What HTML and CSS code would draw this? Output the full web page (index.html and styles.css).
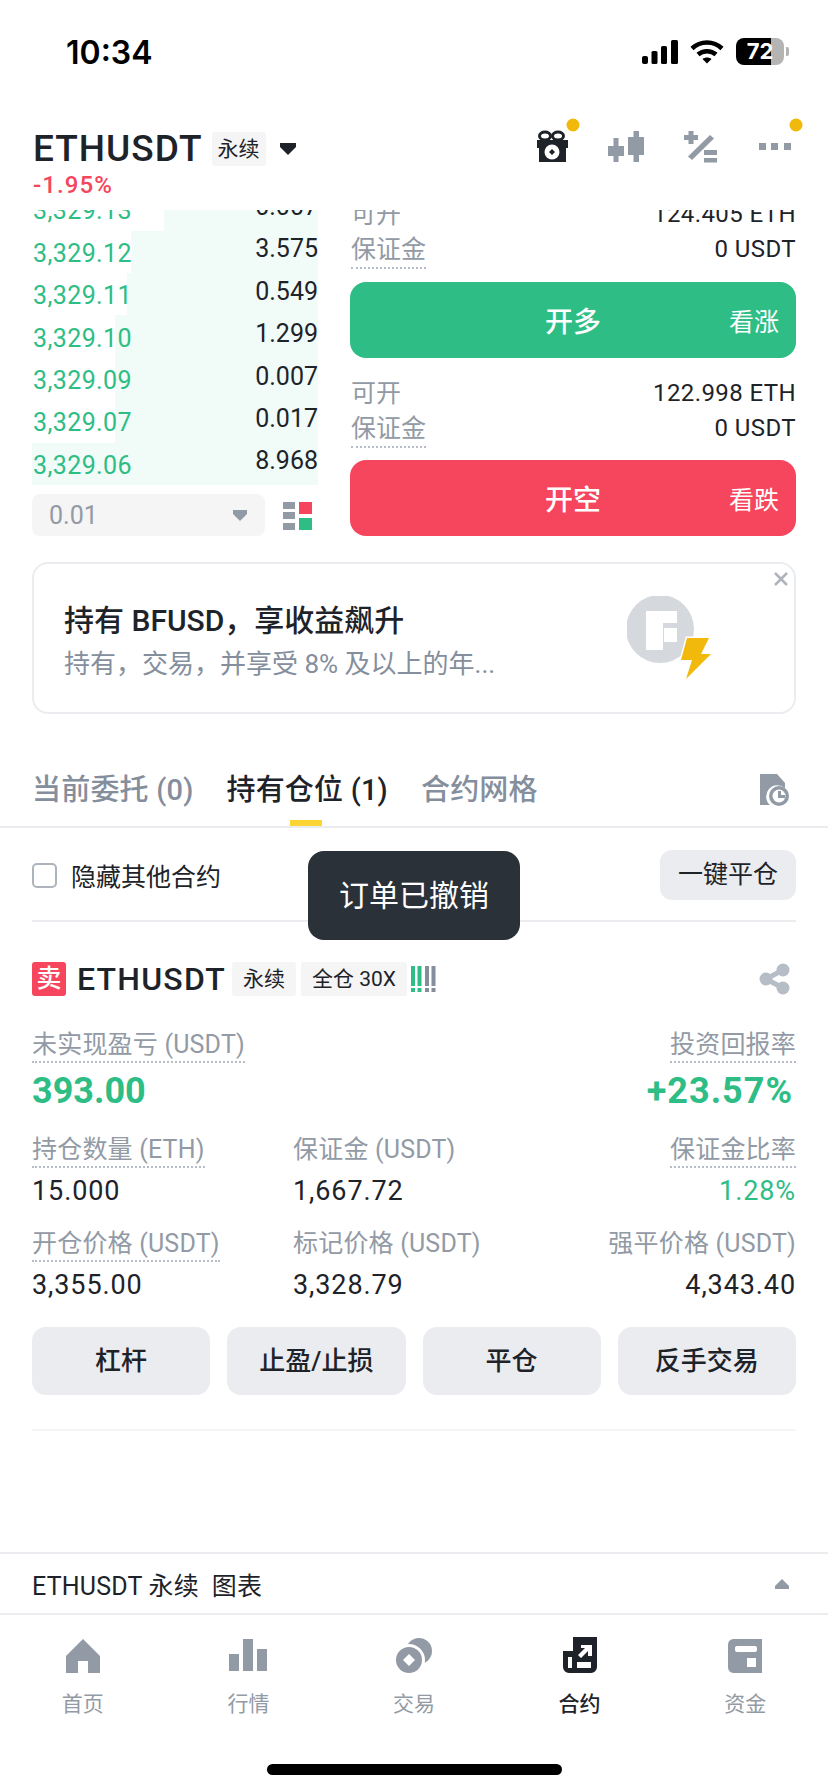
FILE: index.html

```html
<!DOCTYPE html>
<html lang="zh-CN">
<head>
  <meta charset="UTF-8" />
  <meta name="viewport" content="width=device-width, initial-scale=1.0" />
  <title>ETHUSDT 永续</title>
  <link rel="stylesheet" href="styles.css">
</head>
<body>
  <div class="status-bar">
    <span class="clock">10:34</span>
    <div class="status-icons">
      <svg width="36" height="24" viewBox="0 0 36 24" fill="#000">
        <rect x="0" y="16" width="6" height="8" rx="2"/>
        <rect x="9.500" y="11" width="6" height="13" rx="1.500"/>
        <rect x="19" y="6" width="6" height="18" rx="1.500"/>
        <rect x="29" y="0" width="7" height="24" rx="1.500"/>
      </svg>
      <svg class="wifi" width="34" height="24" viewBox="0 0 34 24" fill="none" stroke="#000" stroke-width="4.500">
        <path d="M2 8.500C10.500 0.500 23.500 0.500 32 8.500"/>
        <path d="M8 14.500C13 10 21 10 26 14.500"/>
        <path d="M12.500 19L17 23.500L21.500 19C19 17 15 17 12.500 19Z" fill="#000" stroke="none"/>
      </svg>
      <div class="battery"><span>72</span></div>
      <i class="battery-nub"></i>
    </div>
  </div>

  <header class="top-bar">
    <div class="symbol">
      <div class="symbol-line">
        <span class="symbol-name">ETHUSDT</span>
        <span class="tag tag-top">永续</span>
        <svg class="symbol-caret" width="18" height="14" viewBox="0 0 18 14"><path d="M1 1H17V5L9 13L1 5Z" fill="#1e2329"/></svg>
      </div>
      <div class="symbol-change">-1.95%</div>
    </div>
    <div class="top-icons">
      <svg width="74" height="48" viewBox="0 0 74 48">
        <g fill="none" stroke="#1e2329" stroke-width="3"><ellipse cx="30" cy="18" rx="5.500" ry="4"/><ellipse cx="43" cy="18" rx="5.500" ry="4"/></g>
        <rect x="22" y="22" width="31" height="8" fill="#1e2329"/>
        <rect x="24" y="29" width="27" height="15" fill="#1e2329"/>
        <circle cx="37" cy="34" r="7.500" fill="#fff"/>
        <path d="M37 31L40 34L37 37L34 34Z" fill="#1e2329"/>
        <circle cx="58" cy="7" r="6.500" fill="#f0b90b"/>
      </svg>
      <svg width="74" height="48" viewBox="0 0 74 48" fill="#929aa5">
        <rect x="19" y="28" width="16" height="10"/><rect x="24.500" y="20" width="5" height="24"/>
        <rect x="39" y="19" width="16" height="18"/><rect x="44.500" y="13" width="5.500" height="31"/>
      </svg>
      <svg width="74" height="48" viewBox="0 0 74 48" fill="#929aa5">
        <rect x="21" y="17" width="14" height="5"/><rect x="25.500" y="13" width="5" height="13"/>
        <path d="M47 17L51 20.500L29 42L25 38.500Z"/>
        <rect x="41" y="32" width="13" height="5"/><rect x="41" y="40" width="13" height="4.500"/>
      </svg>
      <svg width="74" height="48" viewBox="0 0 74 48" fill="#929aa5">
        <rect x="22" y="25" width="7" height="7"/><rect x="34" y="25" width="7" height="7"/><rect x="47" y="25" width="7" height="7"/>
        <circle cx="59" cy="7" r="6.500" fill="#f0b90b"/>
      </svg>
    </div>
  </header>

  <section class="trade">
    <div class="book-col">
      <div class="book">
        <div class="book-row" style="background-size:154px 100%"><span class="price">3,329.13</span><span class="qty">0.007</span></div>
        <div class="book-row" style="background-size:187px 100%"><span class="price">3,329.12</span><span class="qty">3.575</span></div>
        <div class="book-row" style="background-size:191px 100%"><span class="price">3,329.11</span><span class="qty">0.549</span></div>
        <div class="book-row" style="background-size:203px 100%"><span class="price">3,329.10</span><span class="qty">1.299</span></div>
        <div class="book-row" style="background-size:203px 100%"><span class="price">3,329.09</span><span class="qty">0.007</span></div>
        <div class="book-row" style="background-size:203px 100%"><span class="price">3,329.07</span><span class="qty">0.017</span></div>
        <div class="book-row" style="background-size:286px 100%"><span class="price">3,329.06</span><span class="qty">8.968</span></div>
      </div>
      <div class="book-foot">
        <div class="tick-select">
          <span>0.01</span>
          <svg width="14" height="11" viewBox="0 0 14 11"><path d="M0 0H14V4L7 11L0 4Z" fill="#929aa5"/></svg>
        </div>
        <svg width="29" height="29" viewBox="0 0 29 29">
          <rect x="0" y="1" width="12" height="7" fill="#929aa5"/>
          <rect x="0" y="11" width="12" height="7" fill="#929aa5"/>
          <rect x="0" y="22" width="12" height="7" fill="#929aa5"/>
          <rect x="16" y="1" width="13" height="12" fill="#f6465d"/>
          <rect x="16" y="17" width="13" height="12" fill="#2ebd85"/>
        </svg>
      </div>
    </div>

    <div class="order-col">
      <div class="order-clip">
        <div class="order-line"><span class="order-label">可开</span><span>124.405 ETH</span></div>
        <div class="order-line"><span class="order-label dotted">保证金</span><span>0 USDT</span></div>
      </div>
      <div class="order-btn long"><b>开多</b><span>看涨</span></div>
      <div class="order-block">
        <div class="order-line"><span class="order-label">可开</span><span>122.998 ETH</span></div>
        <div class="order-line"><span class="order-label dotted">保证金</span><span>0 USDT</span></div>
      </div>
      <div class="order-btn short"><b>开空</b><span>看跌</span></div>
    </div>
  </section>

  <section class="banner">
    <div class="banner-text">
      <div class="banner-title">持有 BFUSD，享收益飙升</div>
      <div class="banner-sub">持有，交易，并享受 8% 及以上的年...</div>
    </div>
    <svg class="banner-logo" width="86" height="86" viewBox="0 0 86 86">
      <circle cx="33" cy="33" r="34" fill="#d5d8dd"/>
      <path d="M19 15H50V27H36V54H19Z" fill="#fff"/>
      <rect x="37" y="32" width="13" height="14" fill="#fff"/>
      <path d="M60 42H82L74 58H84L59 83L65 64H54Z" fill="#f0b90b" stroke="#fff" stroke-width="3" paint-order="stroke"/>
    </svg>
    <svg class="banner-close" width="14" height="14" viewBox="0 0 14 14" fill="none" stroke="#aeb4bc" stroke-width="2.500"><path d="M1 1L13 13M13 1L1 13"/></svg>
  </section>

  <nav class="tabs">
    <span class="tab">当前委托 (0)</span>
    <span class="tab active">持有仓位 (1)</span>
    <span class="tab">合约网格</span>
    <svg class="tab-history" width="30" height="34" viewBox="0 0 30 34">
      <path d="M0 1H17L25 10V15A11 11 0 0 0 10 32H0Z" fill="#929aa5"/>
      <circle cx="19" cy="23" r="10" fill="#929aa5"/>
      <circle cx="19" cy="23" r="6.500" fill="#fff"/>
      <path d="M18 18H21V22H25V25H18Z" fill="#929aa5"/>
    </svg>
  </nav>

  <section class="positions">
    <div class="filter-row">
      <label class="hide-other"><i class="checkbox"></i>隐藏其他合约</label>
      <span class="close-all">一键平仓</span>
    </div>

    <div class="toast">订单已撤销</div>

    <div class="pos-head">
      <span class="side-badge">卖</span>
      <span class="pos-name">ETHUSDT</span>
      <span class="tag">永续</span>
      <span class="tag">全仓 30X</span>
      <svg class="risk" width="25" height="26" viewBox="0 0 25 26">
        <g fill="#2ebd85"><rect x="0" y="0" width="4" height="20"/><rect x="0" y="22" width="4" height="4"/></g>
        <g fill="#2ebd85"><rect x="6.500" y="0" width="4" height="20"/><rect x="6.500" y="22" width="4" height="4"/></g>
        <g fill="#848e9c"><rect x="14" y="0" width="4" height="20"/><rect x="14" y="22" width="4" height="4"/></g>
        <g fill="#848e9c"><rect x="20.500" y="0" width="4" height="20"/><rect x="20.500" y="22" width="4" height="4"/></g>
      </svg>
      <svg class="share" width="31" height="32" viewBox="0 0 31 32">
        <path d="M24 7L7 16L24 25" fill="none" stroke="#b7bdc6" stroke-width="5"/>
        <circle cx="24" cy="7" r="6.500" fill="#b7bdc6"/><circle cx="7" cy="16" r="6.500" fill="#b7bdc6"/><circle cx="24" cy="25" r="6.500" fill="#b7bdc6"/>
      </svg>
    </div>

    <div class="pnl-row">
      <div class="metric">
        <span class="metric-label dotted">未实现盈亏 (USDT)</span>
        <span class="pnl-value">393.00</span>
      </div>
      <div class="metric right">
        <span class="metric-label dotted">投资回报率</span>
        <span class="pnl-value">+23.57%</span>
      </div>
    </div>

    <div class="metric-grid">
      <div class="metric">
        <span class="metric-label dotted">持仓数量 (ETH)</span>
        <span class="metric-value">15.000</span>
      </div>
      <div class="metric">
        <span class="metric-label">保证金 (USDT)</span>
        <span class="metric-value">1,667.72</span>
      </div>
      <div class="metric right">
        <span class="metric-label dotted">保证金比率</span>
        <span class="metric-value up">1.28%</span>
      </div>
      <div class="metric">
        <span class="metric-label dotted">开仓价格 (USDT)</span>
        <span class="metric-value">3,355.00</span>
      </div>
      <div class="metric">
        <span class="metric-label">标记价格 (USDT)</span>
        <span class="metric-value">3,328.79</span>
      </div>
      <div class="metric right">
        <span class="metric-label">强平价格 (USDT)</span>
        <span class="metric-value">4,343.40</span>
      </div>
    </div>

    <div class="pos-actions">
      <span class="pos-btn">杠杆</span>
      <span class="pos-btn">止盈/止损</span>
      <span class="pos-btn">平仓</span>
      <span class="pos-btn">反手交易</span>
    </div>
  </section>

  <div class="chart-bar">
    <span>ETHUSDT 永续&nbsp; 图表</span>
    <svg width="14" height="10" viewBox="0 0 14 10"><path d="M7 0L14 7V10H0V7Z" fill="#929aa5"/></svg>
  </div>

  <footer class="tab-bar">
    <div class="nav-item">
      <svg width="36" height="38" viewBox="0 0 36 38" fill="#929aa5">
        <path fill-rule="evenodd" d="M18 2L35 19V36H23V24H13V36H1V19Z"/>
      </svg>
      <span>首页</span>
    </div>
    <div class="nav-item">
      <svg width="40" height="38" viewBox="0 0 40 38" fill="#929aa5">
        <rect x="1" y="17" width="10" height="17"/><rect x="15" y="2" width="10" height="32"/><rect x="29" y="12" width="10" height="22"/>
      </svg>
      <span>行情</span>
    </div>
    <div class="nav-item">
      <svg width="38" height="38" viewBox="0 0 38 38">
        <circle cx="24" cy="14" r="13" fill="#929aa5"/>
        <circle cx="14" cy="23" r="16" fill="#fff"/>
        <circle cx="14" cy="23" r="13" fill="#929aa5"/>
        <path d="M14 17L20 23L14 29L8 23Z" fill="#fff"/>
      </svg>
      <span>交易</span>
    </div>
    <div class="nav-item active">
      <svg width="36" height="38" viewBox="0 0 36 38" fill="#1e2329">
        <path d="M11 0H35V30A6 6 0 0 1 29 36H7A6 6 0 0 1 1 30V14H11Z"/>
        <rect x="6" y="20" width="4" height="11" fill="#fff"/>
        <rect x="15" y="25" width="14" height="6" fill="#fff"/>
        <path d="M19 8H30V19H26V14L19 21L16 18L23 11H19Z" fill="#fff"/>
      </svg>
      <span>合约</span>
    </div>
    <div class="nav-item">
      <svg width="36" height="38" viewBox="0 0 36 38">
        <path d="M6 2H35V36H6A6 6 0 0 1 1 30V8A6 6 0 0 1 6 2Z" fill="#929aa5"/>
        <rect x="8" y="9" width="22" height="6" rx="2" fill="#fff"/>
        <rect x="20" y="21" width="9" height="9" fill="#fff"/>
      </svg>
      <span>资金</span>
    </div>
  </footer>
  <div class="home-bar"><i></i></div>
</body>
</html>
```

FILE: styles.css

```css
* { box-sizing: border-box; }
body {
  margin: 0;
  width: 828px;
  height: 1792px;
  overflow: hidden;
  position: relative;
  background: #fff;
  color: #1e2329;
  font-family: Roboto, "Noto Sans CJK SC", sans-serif;
}

.status-bar { height: 106px; display: flex; justify-content: space-between; padding: 35px 39px 0 66px; }
.clock { font-family: Inter, sans-serif; font-size: 32px; font-weight: 600; line-height: 36px; color: #000; }
.status-icons { display: flex; align-items: flex-start; padding-top: 5px; width: 147px; }
.wifi { margin-left: 12px; }
.battery {
  width: 48px; height: 27px; margin: -2px 0 0 12px; border-radius: 8px;
  background: linear-gradient(90deg, #000 72%, #b4b4b4 72%);
  color: #fff; font-family: Inter, sans-serif; font-size: 22px; font-weight: 700;
  line-height: 27px; text-align: center;
}
.battery-nub { width: 3px; height: 9px; margin: 7px 0 0 2px; background: #b4b4b4; border-radius: 0 2px 2px 0; }

.top-bar { height: 104px; display: flex; justify-content: space-between; padding: 20px 17px 0 33px; }
.symbol-line { display: flex; align-items: center; height: 46px; }
.symbol-name { font-size: 37px; font-weight: 500; line-height: 46px; letter-spacing: 1px; }
.tag {
  display: inline-block; height: 34px; padding: 0 11px; border-radius: 3px; background: #f5f5f5;
  font-size: 21px; line-height: 34px; white-space: nowrap; color: #1e2329;
}
.tag-top { margin-left: 9px; padding: 0 6px; }
.symbol-caret { margin-left: 13px; }
.symbol-change { font-size: 24px; font-weight: 500; color: #f6465d; line-height: 26px; letter-spacing: 1.1px; }
.top-icons { display: flex; margin-top: -8px; height: 48px; }

.trade { display: flex; justify-content: space-between; padding: 0 32px; height: 352px; }
.book-col { width: 286px; }
.book { height: 275px; overflow: hidden; display: flex; flex-direction: column; justify-content: flex-end; }
.book-row {
  flex: none; height: 42.4px; display: flex; justify-content: space-between; align-items: center;
  background: linear-gradient(#f1fbf8, #f1fbf8) right top no-repeat;
  font-size: 25px; letter-spacing: 0.4px;
}
.price { color: #2ebd85; padding: 3px 0 0 1px; }
.qty { padding: 0 0 6px 0; letter-spacing: 0; }
.book-foot { display: flex; justify-content: space-between; align-items: center; margin-top: 9px; padding-right: 6px; }
.tick-select {
  width: 233px; height: 42px; background: #f5f5f5; border-radius: 8px; padding: 0 18px 0 17px;
  display: flex; justify-content: space-between; align-items: center; color: #929aa5; font-size: 25px;
}
.order-col { width: 446px; font-size: 24px; letter-spacing: 0.4px; }
.order-clip { height: 72px; overflow: hidden; display: flex; flex-direction: column; justify-content: flex-end; padding-bottom: 15px; }
.order-block { padding-top: 18px; height: 102px; }
.order-line { display: flex; justify-content: space-between; align-items: flex-start; height: 35px; padding-left: 1px; line-height: 35px; }
.order-label { color: #929aa5; font-size: 25px; letter-spacing: 0; }
.dotted { border-bottom: 2px dotted #b7bdc6; }
.order-btn {
  height: 76px; border-radius: 16px; color: #fff; display: flex; align-items: center; justify-content: center;
  position: relative; font-size: 25px; letter-spacing: 0;
}
.order-btn b { font-size: 28px; font-weight: 500; }
.order-btn span { position: absolute; right: 17px; }
.long { background: #2ebd85; }
.short { background: #f6465d; }

.banner {
  margin: 0 32px; height: 152px; border: 2px solid #eaecef; border-radius: 16px; padding: 0 0 0 30px;
  display: flex; position: relative;
}
.banner-title { font-size: 30px; font-weight: 500; line-height: 38px; margin-top: 38px; }
.banner-sub { font-size: 26px; color: #848e9c; line-height: 34px; margin-top: 7px; }
.banner-logo { position: absolute; left: 593px; top: 32px; }
.banner-close { position: absolute; right: 6px; top: 8px; }

.tabs {
  margin-top: 38px; height: 76px; border-bottom: 2px solid #eaecef; padding: 0 32px; display: flex; position: relative;
  font-size: 29px; font-weight: 500; line-height: 76px; gap: 33px;
}
.tab { color: #848e9c; height: 74px; position: relative; letter-spacing: 0.2px; }
.tab.active { color: #1e2329; }
.tab.active::after { content: ""; position: absolute; left: 64px; bottom: 0; width: 32px; height: 6px; background: #fcd535; }
.tab-history { position: absolute; right: 38px; top: 21px; }

.positions { padding: 0 32px; }
.filter-row {
  height: 94px; border-bottom: 2px solid #eaecef; display: flex; justify-content: space-between; align-items: center;
  padding-top: 2px;
}
.hide-other { display: flex; align-items: center; font-size: 25px; }
.checkbox { width: 25px; height: 25px; border: 2px solid #aeb4bc; border-radius: 5px; margin-right: 14px; }
.close-all { height: 50px; width: 136px; background: #eaecef; border-radius: 12px; font-size: 25px; line-height: 50px; text-align: center; }
.toast {
  position: absolute; left: 308px; top: 851px; width: 212px; height: 89px; border-radius: 16px;
  background: #2b3139; color: #fff; font-size: 30px; line-height: 89px; text-align: center;
}
.pos-head { display: flex; align-items: center; height: 34px; margin-top: 40px; }
.side-badge { width: 34px; height: 34px; background: #f6465d; color: #fff; border-radius: 3px; font-size: 25px; line-height: 34px; text-align: center; font-weight: 500; }
.pos-name { font-size: 32px; font-weight: 500; margin: 0 6px 0 11px; letter-spacing: 1.2px; }
.pos-head .tag + .tag { margin-left: 5px; }
.risk { margin-left: 4px; }
.share { margin-left: auto; margin-right: 6px; }

.metric { display: flex; flex-direction: column; align-items: flex-start; }
.metric.right { align-items: flex-end; }
.metric-label { font-size: 25px; color: #929aa5; line-height: 33px; letter-spacing: 0.2px; }
.metric-label:not(.dotted) { border-bottom: 2px solid transparent; }
.pnl-row { display: flex; justify-content: space-between; margin-top: 32px; }
.pnl-value { font-size: 36px; font-weight: 700; color: #2ebd85; line-height: 44px; margin-top: 6px; }
.metric.right .pnl-value { letter-spacing: 1px; margin-right: 3px; }
.metric-grid { display: grid; grid-template-columns: 261px 1fr 1fr; row-gap: 18px; margin-top: 20px; }
.metric-value { font-size: 27px; line-height: 36px; margin-top: 5px; letter-spacing: 0.9px; }
.metric-value.up { color: #2ebd85; }

.pos-actions { display: grid; grid-template-columns: repeat(4, 1fr); gap: 17px; margin-top: 24px; padding-bottom: 34px; border-bottom: 2px solid #f5f5f5; }
.pos-btn { height: 68px; background: #eaecef; border-radius: 14px; font-size: 26px; font-weight: 500; line-height: 68px; text-align: center; }

.chart-bar {
  position: absolute; left: 0; right: 0; top: 1552px; height: 63px; border-top: 2px solid #eaecef; border-bottom: 2px solid #eaecef;
  display: flex; justify-content: space-between; align-items: center; padding: 0 39px 0 32px; font-size: 25px; letter-spacing: 0.2px;
}
.tab-bar { position: absolute; left: 0; right: 0; top: 1615px; display: grid; grid-template-columns: repeat(5, 1fr); padding-top: 22px; }
.nav-item { display: flex; flex-direction: column; align-items: center; font-size: 21px; color: #929aa5; }
.nav-item span { line-height: 30px; margin-top: 14px; }
.nav-item.active { color: #1e2329; font-weight: 500; }
.home-bar { position: absolute; left: 0; right: 0; top: 1764px; display: flex; justify-content: center; }
.home-bar i { width: 295px; height: 11px; border-radius: 6px; background: #000; }
```
